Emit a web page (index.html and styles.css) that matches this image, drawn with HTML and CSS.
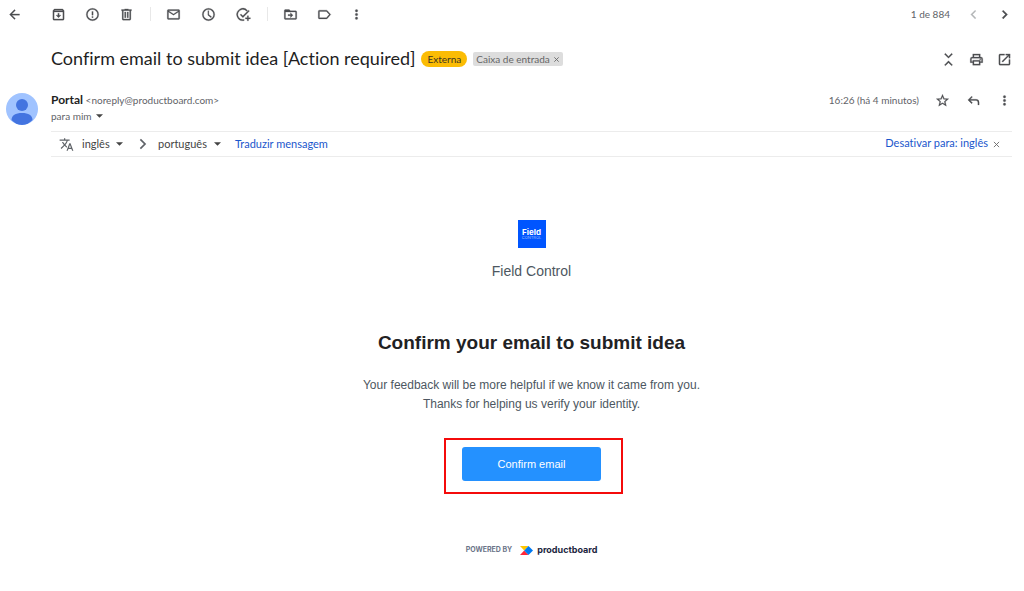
FILE: index.html
```html
<!DOCTYPE html>
<html lang="pt-BR">

<head>
  <meta charset="UTF-8">
  <meta name="viewport" content="width=device-width, initial-scale=1.0">
  <title>Confirm email to submit idea [Action required]</title>
  <link rel="stylesheet" href="styles.css">
</head>

<body>
  <header class="toolbar">
    <button class="icon-btn back" aria-label="Voltar"><svg viewBox="0 0 24 24"><path d="M20 11H7.830l5.590-5.590L12 4l-8 8 8 8 1.410-1.410L7.830 13H20z"/></svg></button>
    <div class="group">
      <button class="icon-btn" aria-label="Arquivar"><svg viewBox="0 0 24 24"><path d="M20.540 5.230l-1.390-1.680C18.880 3.210 18.470 3 18 3H6c-.47 0-.88.21-1.160.55L3.460 5.230C3.170 5.570 3 6.020 3 6.500V19c0 1.100.9 2 2 2h14c1.100 0 2-.9 2-2V6.500c0-.48-.17-.93-.46-1.270zM6.240 5h11.520l.83 1H5.420zM5 19V8h14v11zm8-9h-2v3H8l4 4 4-4h-3z"/></svg></button>
      <button class="icon-btn" aria-label="Denunciar spam"><svg viewBox="0 0 24 24"><path d="M12 2a10 10 0 1 0 0 20 10 10 0 0 0 0-20zm0 18a8 8 0 1 1 0-16 8 8 0 0 1 0 16zM11 7h2v6h-2zm0 8h2v2h-2z"/></svg></button>
      <button class="icon-btn" aria-label="Excluir"><svg viewBox="0 0 24 24"><path d="M15 4V3H9v1H4v2h1v13c0 1.100.9 2 2 2h10c1.100 0 2-.9 2-2V6h1V4zm2 15H7V6h10zM9 8h2v9H9zm4 0h2v9h-2z"/></svg></button>
    </div>
    <span class="divider"></span>
    <div class="group wide">
      <button class="icon-btn" aria-label="Marcar como não lida"><svg viewBox="0 0 24 24"><path d="M22 6c0-1.100-.9-2-2-2H4c-1.100 0-2 .9-2 2v12c0 1.100.9 2 2 2h16c1.100 0 2-.9 2-2zm-2 0l-8 5-8-5zm0 12H4V8l8 5 8-5z"/></svg></button>
      <button class="icon-btn" aria-label="Adiar"><svg viewBox="0 0 24 24"><path d="M12 2a10 10 0 1 0 0 20 10 10 0 0 0 0-20zm0 18a8 8 0 1 1 0-16 8 8 0 0 1 0 16zM12.500 6H11v7l5 4 1-1.500-4.500-3.500z"/></svg></button>
      <button class="icon-btn" aria-label="Adicionar às Tarefas"><svg viewBox="0 0 24 24"><path d="M20 17h3v2h-3v3h-2v-3h-3v-2h3v-3h2zM11 20c.7 0 1.400-.1 2-.3v2.100A10 10 0 1 1 18.500 5.400L17 6.800A8 8 0 1 0 11 20zm10.600-13.500L11 17l-4.500-4.500L8 11l3 3L20 5z"/></svg></button>
    </div>
    <span class="divider"></span>
    <div class="group">
      <button class="icon-btn" aria-label="Mover para"><svg viewBox="0 0 24 24"><path d="M20 6h-8l-2-2H4c-1.100 0-2 .9-2 2v12c0 1.100.9 2 2 2h16c1.100 0 2-.9 2-2V8c0-1.100-.9-2-2-2zm0 12H4V8h16zm-8-1l4-4-4-4v3H8v2h4z"/></svg></button>
      <button class="icon-btn" aria-label="Marcadores"><svg viewBox="0 0 24 24"><path d="M16.600 5.800A2 2 0 0 0 15 5H4a2 2 0 0 0-2 2v10a2 2 0 0 0 2 2h11c.7 0 1.300-.3 1.600-.8L22 12zM15 17H4V7h11l4.500 5z"/></svg></button>
    </div>
    <button class="icon-btn more" aria-label="Mais"><svg viewBox="0 0 24 24"><path d="M12 8a2 2 0 1 0 0-4 2 2 0 0 0 0 4zm0 2a2 2 0 1 0 0 4 2 2 0 0 0 0-4zm0 6a2 2 0 1 0 0 4 2 2 0 0 0 0-4z"/></svg></button>
    <div class="pager">
      <span>1 de 884</span>
      <button class="icon-btn" aria-label="Mais recente" disabled><svg viewBox="0 0 24 24"><path d="M14.500 5L16 6.500 10.500 12l5.500 5.500-1.500 1.500-7-7z"/></svg></button>
      <button class="icon-btn" aria-label="Mais antiga"><svg viewBox="0 0 24 24"><path d="M10 5L8.200 6.800 13.400 12l-5.200 5.200L10 19l7-7z"/></svg></button>
    </div>
  </header>

  <main class="mail">
    <div class="subject">
      <h1>Confirm email to submit idea [Action required]</h1>
      <span class="tag external">Externa</span>
      <span class="tag inbox">Caixa de entrada <button aria-label="Remover marcador"><svg viewBox="0 0 8 8"><path d="M1.500 1.500l5 5m0-5l-5 5"/></svg></button></span>
      <div class="actions">
        <button class="icon-btn" aria-label="Recolher tudo"><svg viewBox="0 0 24 24"><path d="M5.500 3.400L7 2l5 5 5-5 1.500 1.400L12 10zM5.500 20.600L7 22l5-5 5 5 1.500-1.400L12 14z"/></svg></button>
        <button class="icon-btn" aria-label="Imprimir"><svg viewBox="0 0 24 24"><path d="M19 8h-1V3H6v5H5a3 3 0 0 0-3 3v6h4v4h12v-4h4v-6a3 3 0 0 0-3-3zM8 5h8v3H8zm8 14H8v-4h8zm2-4v-2H6v2H4v-4c0-.6.4-1 1-1h14c.6 0 1 .4 1 1v4z"/><circle cx="18" cy="11.500" r="1"/></svg></button>
        <button class="icon-btn" aria-label="Abrir em nova janela"><svg viewBox="0 0 24 24"><path d="M19 19H5V5h7V3H5a2 2 0 0 0-2 2v14c0 1.100.9 2 2 2h14c1.100 0 2-.9 2-2v-7h-2zM14 3v2h3.600l-9.800 9.800 1.400 1.400L19 6.400V10h2V3z"/></svg></button>
      </div>
    </div>

    <div class="sender">
      <svg class="avatar" viewBox="0 0 32 32">
        <defs><clipPath id="face"><circle cx="16" cy="16" r="16"/></clipPath></defs>
        <g clip-path="url(#face)">
          <path fill="#a0c3ff" d="M0 0h32v32H0z"/>
          <circle cx="16" cy="12" r="6" fill="#4374e0"/>
          <path fill="#4374e0" d="M5.500 27c0-4.500 4-7 10.500-7s10.500 2.500 10.500 7c-3 3-6 5-10.500 5s-7.500-2-10.500-5z"/>
        </g>
      </svg>
      <div class="from">
        <p><strong>Portal</strong> &lt;noreply@productboard.com&gt;</p>
        <button class="to">para mim <svg class="caret" viewBox="0 0 8 4"><path d="M0 0h8L4 4z"/></svg></button>
      </div>
      <span class="time">16:26 (há 4 minutos)</span>
      <div class="actions">
        <button class="icon-btn" aria-label="Com estrela"><svg viewBox="0 0 24 24"><path d="M22 9.200l-7.200-.6L12 2 9.200 8.600 2 9.200l5.500 4.800L5.800 21l6.200-3.700 6.200 3.700-1.600-7zM12 15.400l-3.800 2.300 1-4.300-3.300-2.900 4.400-.4L12 6.100l1.700 4 4.400.4-3.300 2.900 1 4.300z"/></svg></button>
        <button class="icon-btn" aria-label="Responder"><svg viewBox="0 0 24 24"><path d="M9 5l1.400 1.400L6.800 10H16a5 5 0 0 1 5 5v4h-2v-4a3 3 0 0 0-3-3H6.800l3.600 3.600L9 17l-6-6z"/></svg></button>
        <button class="icon-btn" aria-label="Mais"><svg viewBox="0 0 24 24"><path d="M12 8a2 2 0 1 0 0-4 2 2 0 0 0 0 4zm0 2a2 2 0 1 0 0 4 2 2 0 0 0 0-4zm0 6a2 2 0 1 0 0 4 2 2 0 0 0 0-4z"/></svg></button>
      </div>
    </div>

    <div class="translate">
      <svg class="lang-icon" viewBox="0 0 24 24"><path d="M12.900 15.100l-2.600-2.500a17.500 17.500 0 0 0 3.800-6.600H17V4h-7V2H8v2H1v2h11.200A16 16 0 0 1 9 11.300 15.600 15.600 0 0 1 6.700 8h-2c.7 1.600 1.700 3.200 3 4.600l-5.100 5L4 19l5-5 3.100 3.100zM18.500 10h-2L12 22h2l1.100-3h4.800l1.100 3h2zm-2.600 7l1.600-4.300 1.600 4.300z"/></svg>
      <label class="lang">
        <select class="source" aria-label="Idioma de origem">
          <option>inglês</option>
          <option>espanhol</option>
        </select>
        <svg class="caret" viewBox="0 0 8 4"><path d="M0 0h8L4 4z"/></svg>
      </label>
      <svg class="arrow" viewBox="0 0 24 24"><path d="M8.500 3L6.500 5l7 7-7 7 2 2 9-9z"/></svg>
      <label class="lang">
        <select class="target" aria-label="Idioma de destino">
          <option>português</option>
          <option>espanhol</option>
        </select>
        <svg class="caret" viewBox="0 0 8 4"><path d="M0 0h8L4 4z"/></svg>
      </label>
      <a href="#" class="run">Traduzir mensagem</a>
      <a href="#" class="off">Desativar para: inglês</a>
      <button class="close" aria-label="Fechar"><svg viewBox="0 0 8 8"><path d="M1 1l6 6m0-6L1 7"/></svg></button>
    </div>

    <article class="content">
      <div class="logo" aria-label="Field Control">
        <b>Field</b>
        <small>CONTROL</small>
      </div>
      <p class="company">Field Control</p>
      <h2>Confirm your email to submit idea</h2>
      <p class="text">Your feedback will be more helpful if we know it came from you.<br>Thanks for helping us verify your identity.</p>
      <button class="confirm">Confirm email</button>
      <div class="powered">
        <span>POWERED BY</span>
        <svg viewBox="0 0 13 9"><path fill="#ffc600" d="M0 0h8.500L4.200 4.500z"/><path fill="#ff2638" d="M0 9h8.500L4.200 4.500z"/><path fill="#0079f2" d="M8.500 0L13 4.500 8.500 9 4.200 4.500z"/></svg>
        <b>productboard</b>
      </div>
    </article>
  </main>
</body>

</html>
```
FILE: styles.css
```css
* {
  box-sizing: border-box;
}

body {
  margin: 0;
  background: #fff;
  color: #5f6368;
  font: 10px/16px Lato, sans-serif;
  font-variant-ligatures: none;
}

h1,
h2,
p {
  margin: 0;
}

button {
  display: flex;
  align-items: center;
  padding: 0;
  border: 0;
  background: none;
  color: inherit;
  font: inherit;
  cursor: pointer;
}

svg {
  display: block;
  flex: none;
  fill: currentColor;
}

a {
  color: #1a56cc;
  text-decoration: none;
}

.icon-btn {
  color: #4b4d50;
}

.icon-btn svg {
  width: 15px;
  height: 15px;
  stroke: currentColor;
  stroke-width: 0.4;
}

.icon-btn:disabled {
  color: #b4b6b8;
}

.toolbar {
  display: flex;
  align-items: center;
  height: 28px;
  padding: 0 12px 0 7px;
}

.back {
  margin-right: 29px;
}

.group {
  display: flex;
  gap: 19px;
}

.wide {
  gap: 20px;
}

.divider {
  width: 1px;
  height: 14px;
  margin: 0 15px 0 16px;
  background: #e8e8e8;
}

.more {
  margin-left: 17px;
}

.pager {
  display: flex;
  align-items: center;
  gap: 16px;
  margin-left: auto;
}

.mail {
  padding: 15px 12px 0 51px;
}

.subject {
  display: flex;
  align-items: center;
  height: 32px;
}

h1 {
  padding-bottom: 2px;
  color: #1f1f1f;
  font-size: 18px;
  font-weight: 400;
  line-height: 24px;
}

.tag {
  display: flex;
  align-items: center;
  margin-left: 6px;
}

.external {
  height: 16px;
  padding: 0 6px;
  border-radius: 8px;
  background: #fbbc04;
  color: #3c3420;
}

.inbox {
  height: 14px;
  padding: 0 3px;
  border-radius: 2px;
  background: #ddd;
  color: #666;
}

.inbox svg,
.close svg {
  width: 7px;
  height: 7px;
  stroke: #666;
}

.inbox button {
  margin: 1px 0 0 3px;
}

.actions {
  display: flex;
  gap: 13px;
  margin-left: auto;
}

.sender {
  display: flex;
  height: 56px;
  padding-top: 17px;
}

.avatar {
  width: 32px;
  height: 32px;
  margin: 1px 13px 0 -45px;
}

.from strong {
  color: #1f1f1f;
  font-size: 12px;
}

.caret {
  width: 7px;
  height: 4px;
  color: #444;
}

.to .caret {
  margin-left: 4px;
}

.time {
  margin-left: auto;
}

.sender .actions {
  gap: 16px;
  height: 15px;
  margin: 1px 0 0 16px;
}

.translate {
  display: flex;
  align-items: center;
  height: 26px;
  padding: 0 12px 0 8px;
  border: solid #ececec;
  border-width: 1px 0;
  font-size: 11px;
}

.lang-icon {
  width: 15px;
  height: 15px;
  margin-right: 8px;
}

.lang {
  display: flex;
  align-items: center;
  gap: 3px;
}

.lang select {
  appearance: none;
  padding: 0;
  border: 0;
  background: none;
  color: #444;
  font: inherit;
}

.source {
  width: 31px;
}

.target {
  width: 53px;
}

.arrow {
  width: 14px;
  height: 14px;
  margin: 0 8px 0 13px;
}

.run {
  margin-left: 14px;
}

.off {
  margin-left: auto;
  padding-bottom: 2px;
}

.close {
  margin-left: 5px;
}

.content {
  display: flex;
  flex-direction: column;
  align-items: center;
  padding: 63px 0 32px;
  color: #4d5761;
  font-family: "Liberation Sans", sans-serif;
  text-align: center;
}

.logo {
  display: flex;
  flex-direction: column;
  align-items: center;
  justify-content: center;
  width: 28px;
  height: 28px;
  background: #0055ff;
  color: #fff;
  font-family: Inter, sans-serif;
}

.logo b {
  font-size: 8px;
  line-height: 8px;
}

.logo small {
  color: #9dbdff;
  font-size: 4px;
  line-height: 4px;
}

.company {
  margin-top: 13px;
  font-size: 14px;
  line-height: 20px;
}

h2 {
  margin-top: 50px;
  color: #1f2224;
  font-size: 19px;
  line-height: 24px;
}

.text {
  margin-top: 21px;
  font-size: 12px;
  line-height: 19px;
}

.confirm {
  position: relative;
  justify-content: center;
  width: 139px;
  height: 34px;
  margin-top: 33px;
  border-radius: 3px;
  background: #2491ff;
  color: #fff;
  font-size: 11px;
}

/* red marker around the button */
.confirm::after {
  content: "";
  position: absolute;
  inset: -9px -22px -13px -18px;
  border: 2px solid #f40b0b;
}

.powered {
  display: flex;
  align-items: center;
  margin-top: 61px;
  color: #1b2540;
  font-family: Inter, sans-serif;
}

.powered span {
  color: #6b7488;
  font-size: 7px;
  font-weight: 700;
}

.powered svg {
  width: 13px;
  height: 9px;
  margin: 0 4px 0 8px;
}

.powered b {
  font-size: 9px;
}
```
